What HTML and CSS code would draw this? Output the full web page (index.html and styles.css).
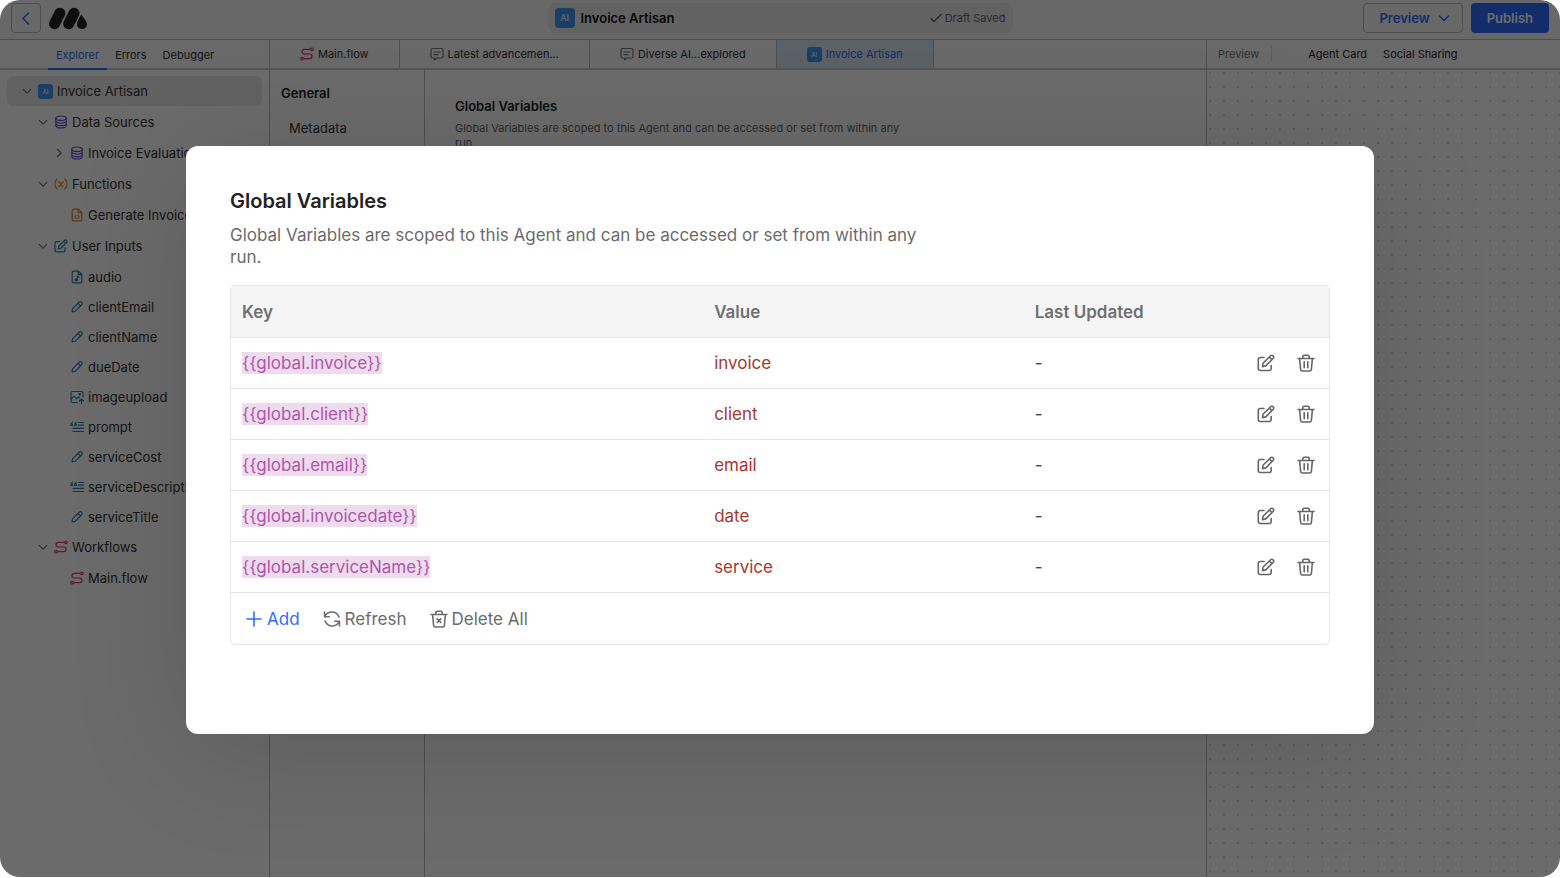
FILE: index.html
```html
<!DOCTYPE html>
<html lang="en">
<head>
<meta charset="utf-8">
<title>Invoice Artisan</title>
<link rel="stylesheet" href="styles.css">
</head>
<body>
<svg class="sprite" aria-hidden="true">
  <symbol id="chev-down" viewBox="0 0 12 12"><path d="M1.500 4l4.500 4.500L10.500 4"/></symbol>
  <symbol id="chev-right" viewBox="0 0 12 12"><path d="M4 1.500L8.500 6 4 10.500"/></symbol>
  <symbol id="db" viewBox="0 0 14 14"><ellipse cx="7" cy="3.200" rx="5.200" ry="2.200"/><path d="M1.800 3.200v7.600c0 1.200 2.300 2.200 5.200 2.200s5.200-1 5.200-2.200V3.200M1.800 5.800C1.800 7 4.100 8 7 8s5.200-1 5.200-2.200M1.800 8.400c0 1.200 2.300 2.200 5.200 2.200s5.200-1 5.200-2.200"/></symbol>
  <symbol id="fn" viewBox="0 0 14 14"><path d="M3 2C.3 5 .3 9 3 12M11 2c2.700 3 2.700 7 0 10M4.600 4.800h1L8 9.300h1.200M9.500 4.800c-1.600 0-2.900 4.500-4.900 4.500"/></symbol>
  <symbol id="code-file" viewBox="0 0 14 14"><path d="M3.200 1.200h5.300l3.300 3.300v7.300a1 1 0 0 1-1 1H3.200a1 1 0 0 1-1-1V2.200a1 1 0 0 1 1-1zM8.300 1.400v3.300h3.300M6 7.300L4.800 8.800 6 10.300M8 7.300l1.200 1.500L8 10.300"/></symbol>
  <symbol id="audio-file" viewBox="0 0 14 14"><path d="M3.200 1.200h5.300l3.300 3.300v7.300a1 1 0 0 1-1 1H3.200a1 1 0 0 1-1-1V2.200a1 1 0 0 1 1-1zM8.300 1.400v3.300h3.300M7.300 9.800V6l1.500 1.200"/><circle cx="6.200" cy="9.800" r="1"/></symbol>
  <symbol id="pencil" viewBox="0 0 14 14"><path d="M2 12l.5-3.200 6.800-6.800c1.600-1.300 3.800.8 2.600 2.500L5.100 11.400zM8 3.400l2.600 2.600"/></symbol>
  <symbol id="edit" viewBox="0 0 18 18"><path d="M7 3.500H3.300C2 3.500 1.300 4.200 1.300 5.500v9c0 1.300.7 2 2 2h8.900c1.300 0 2-.7 2-2v-3M6 9.300l7.600-7.600c1.700-1.300 4 .8 2.700 2.600L8.800 11.900l-3.300.7zM12.300 3l2.600 2.600"/></symbol>
  <symbol id="image" viewBox="0 0 14 14"><path d="M7.500 12.500h-5c-1 0-1.500-.5-1.500-1.500V3c0-1 .5-1.500 1.500-1.500h9c1 0 1.500.5 1.500 1.500v4M1.200 9L4 6.200l2.500 2.500L8.500 7l1 .8M11.500 13.500V9.300M9.500 11l2-2 2 2"/><circle cx="9.700" cy="4.300" r=".7"/></symbol>
  <symbol id="prompt" viewBox="0 0 14 14"><path d="M8.500 2.500h5M8.500 5.200h5M3 8.300h10.500M3 11.500h10.500M2.600 2c-1.500.5-1.800 1.500-1.800 3.500h1.700V4H1M6.500 2C5 2.500 4.700 3.500 4.700 5.500h1.700V4H5"/></symbol>
  <symbol id="flow" viewBox="0 0 14 14"><circle cx="12" cy="2.300" r="1.300"/><circle cx="2" cy="11.700" r="1.300"/><path d="M10.500 2.300H4.300a2.350 2.350 0 0 0 0 4.700h5.400a2.350 2.350 0 0 1 0 4.700H3.500"/></symbol>
  <symbol id="chat" viewBox="0 0 14 14"><path d="M2.500 1.500h9c.9 0 1.500.6 1.500 1.500v6.500c0 .9-.6 1.500-1.500 1.500H6.800L4.500 12.800V11h-2C1.600 11 1 10.400 1 9.500V3c0-.9.6-1.500 1.500-1.500zM4 5h6M4 7.700h4"/></symbol>
  <symbol id="trash" viewBox="0 0 18 18"><path d="M1 4.500h16M2.600 4.500l1 10.700c.1 1.200.7 1.800 1.800 1.800h7.200c1.100 0 1.700-.6 1.800-1.800l1-10.700M5.800 4.300V2.500c0-.9.5-1.300 1.300-1.300h3.800c.8 0 1.300.4 1.300 1.300v1.800M7.200 7.700v6M10.800 7.700v6"/></symbol>
  <symbol id="trash-x" viewBox="0 0 18 18"><path d="M1 4.500h16M2.600 4.500l1 10.700c.1 1.200.7 1.800 1.800 1.800h7.200c1.100 0 1.700-.6 1.800-1.800l1-10.700M5.800 4.300V2.500c0-.9.5-1.300 1.300-1.300h3.800c.8 0 1.300.4 1.300 1.300v1.800M7.200 8.900l3.600 3.600M10.800 8.900l-3.600 3.600"/></symbol>
  <symbol id="refresh" viewBox="0 0 18 18"><path d="M1.500 2v4.800h4.700M1.800 6.500C4.500.8 13 .2 16 7M16.500 16v-4.800h-4.700M16.200 11.500C13.500 17.200 5 17.800 2 11"/></symbol>
  <symbol id="plus" viewBox="0 0 18 18"><path d="M9 2v14M2 9h14"/></symbol>
  <symbol id="check" viewBox="0 0 12 12"><path d="M1 6.500l3 3 7-7"/></symbol>
</svg>

<div class="app">
  <header class="topbar">
    <div class="brand">
      <button class="back" aria-label="Back"><svg class="i16"><path d="M10.500 3L5 8.500l5.500 5.500"/></svg></button>
      <svg class="logo" viewBox="0 0 38 24" role="img" aria-label="Logo"><path class="bar" d="M5.500 17.700L10.800 7.200M19.700 17.700L25 7.200"/><path class="drop" d="M32.300 8.200c1.800 3.500 5.700 6.500 5.700 10a5 5 0 0 1-10 0c0-3.500 2.800-6.500 4.300-10z"/></svg>
    </div>
    <div class="doc">
      <span class="ai ai-lg">AI</span>
      <strong class="doc-name">Invoice Artisan</strong>
      <span class="saved"><svg class="i12"><use href="#check"/></svg>Draft Saved</span>
    </div>
    <div class="actions">
      <button class="btn btn-line">Preview<svg class="i12"><use href="#chev-down"/></svg></button>
      <button class="btn btn-fill">Publish</button>
    </div>
  </header>

  <div class="work">
    <aside class="side">
      <nav class="side-tabs">
        <a href="#" class="on">Explorer</a><a href="#">Errors</a><a href="#">Debugger</a>
      </nav>
      <div class="tree">
        <div class="row root"><svg class="chev"><use href="#chev-down"/></svg><span class="ai">AI</span>Invoice Artisan</div>
        <div class="group">
          <div class="row l1"><svg class="chev"><use href="#chev-down"/></svg><svg class="ic purple"><use href="#db"/></svg>Data Sources</div>
          <div class="row l2"><svg class="chev"><use href="#chev-right"/></svg><svg class="ic purple"><use href="#db"/></svg>Invoice Evaluation</div>
        </div>
        <div class="group">
          <div class="row l1"><svg class="chev"><use href="#chev-down"/></svg><svg class="ic orange"><use href="#fn"/></svg>Functions</div>
          <div class="row l3"><svg class="ic orange"><use href="#code-file"/></svg>Generate Invoice</div>
        </div>
        <div class="group">
          <div class="row l1"><svg class="chev"><use href="#chev-down"/></svg><svg class="ic teal"><use href="#edit"/></svg>User Inputs</div>
          <div class="row l3"><svg class="ic teal"><use href="#audio-file"/></svg>audio</div>
          <div class="row l3"><svg class="ic teal"><use href="#pencil"/></svg>clientEmail</div>
          <div class="row l3"><svg class="ic teal"><use href="#pencil"/></svg>clientName</div>
          <div class="row l3"><svg class="ic teal"><use href="#pencil"/></svg>dueDate</div>
          <div class="row l3"><svg class="ic teal"><use href="#image"/></svg>imageupload</div>
          <div class="row l3"><svg class="ic teal"><use href="#prompt"/></svg>prompt</div>
          <div class="row l3"><svg class="ic teal"><use href="#pencil"/></svg>serviceCost</div>
          <div class="row l3"><svg class="ic teal"><use href="#prompt"/></svg>serviceDescription</div>
          <div class="row l3"><svg class="ic teal"><use href="#pencil"/></svg>serviceTitle</div>
        </div>
        <div class="group">
          <div class="row l1"><svg class="chev"><use href="#chev-down"/></svg><svg class="ic pink"><use href="#flow"/></svg>Workflows</div>
          <div class="row l3"><svg class="ic pink"><use href="#flow"/></svg>Main.flow</div>
        </div>
      </div>
    </aside>

    <main class="center">
      <nav class="tabs">
        <a href="#"><svg class="ic pink"><use href="#flow"/></svg>Main.flow</a>
        <a href="#"><svg class="ic gray"><use href="#chat"/></svg>Latest advancemen...</a>
        <a href="#"><svg class="ic gray"><use href="#chat"/></svg>Diverse AI...explored</a>
        <a href="#" class="on"><span class="ai">AI</span>Invoice Artisan</a>
      </nav>
      <div class="panes">
        <section class="settings">
          <h3>General</h3>
          <a href="#">Metadata</a>
        </section>
        <section class="content">
          <h3>Global Variables</h3>
          <p>Global Variables are scoped to this Agent and can be accessed or set from within any run.</p>
        </section>
      </div>
    </main>

    <aside class="preview">
      <nav class="preview-tabs">
        <span class="label">Preview</span>
        <a href="#">Agent Card</a><a href="#">Social Sharing</a>
      </nav>
      <div class="canvas"></div>
    </aside>
  </div>

  <div class="overlay">
    <div class="modal" role="dialog" aria-modal="true" aria-labelledby="modal-title">
      <h2 id="modal-title">Global Variables</h2>
      <p>Global Variables are scoped to this Agent and can be accessed or set from within any run.</p>
      <div class="box">
        <table>
          <colgroup><col class="c-key"><col class="c-value"><col class="c-date"><col></colgroup>
          <thead><tr><th>Key</th><th>Value</th><th>Last Updated</th><th></th></tr></thead>
          <tbody>
            <tr><td><mark>{{global.invoice}}</mark></td><td class="val">invoice</td><td>-</td><td><div class="tools"><button aria-label="Edit"><svg><use href="#edit"/></svg></button><button aria-label="Delete"><svg><use href="#trash"/></svg></button></div></td></tr>
            <tr><td><mark>{{global.client}}</mark></td><td class="val">client</td><td>-</td><td><div class="tools"><button aria-label="Edit"><svg><use href="#edit"/></svg></button><button aria-label="Delete"><svg><use href="#trash"/></svg></button></div></td></tr>
            <tr><td><mark>{{global.email}}</mark></td><td class="val">email</td><td>-</td><td><div class="tools"><button aria-label="Edit"><svg><use href="#edit"/></svg></button><button aria-label="Delete"><svg><use href="#trash"/></svg></button></div></td></tr>
            <tr><td><mark>{{global.invoicedate}}</mark></td><td class="val">date</td><td>-</td><td><div class="tools"><button aria-label="Edit"><svg><use href="#edit"/></svg></button><button aria-label="Delete"><svg><use href="#trash"/></svg></button></div></td></tr>
            <tr><td><mark>{{global.serviceName}}</mark></td><td class="val">service</td><td>-</td><td><div class="tools"><button aria-label="Edit"><svg><use href="#edit"/></svg></button><button aria-label="Delete"><svg><use href="#trash"/></svg></button></div></td></tr>
          </tbody>
        </table>
        <div class="foot">
          <button class="add"><svg><use href="#plus"/></svg>Add</button>
          <button><svg><use href="#refresh"/></svg>Refresh</button>
          <button><svg><use href="#trash-x"/></svg>Delete All</button>
        </div>
      </div>
    </div>
  </div>
</div>
</body>
</html>
```

FILE: styles.css
```css
* { box-sizing: border-box; margin: 0; }
body {
  padding-bottom: 1px;
  background: #fff;
  color: #333;
  font: 13px/16px Inter, "Liberation Sans", sans-serif;
}
a { color: inherit; text-decoration: none; }
button { font: inherit; color: inherit; background: none; border: 0; padding: 0; cursor: pointer; }
svg { fill: none; stroke: currentColor; stroke-linecap: round; stroke-linejoin: round; flex: none; }
.sprite { position: absolute; width: 0; height: 0; }
.i16 { width: 16px; height: 16px; stroke-width: 1.6; }
.i12 { width: 12px; height: 12px; stroke-width: 1.5; }
.ic { width: 14px; height: 14px; stroke-width: 1.2; }
.purple { color: #6f4fd8; }
.orange { color: #dd8a1c; }
.teal { color: #2b87a8; }
.pink { color: #e0396f; }
.gray { color: #777; }

.app {
  position: relative;
  display: flex;
  flex-direction: column;
  min-height: calc(100vh - 1px);
  background: #fff;
  border-radius: 20px;
  overflow: hidden;
}

/* Top bar */
.topbar {
  display: grid;
  grid-template-columns: 1fr minmax(0, 465px) 1fr;
  align-items: center;
  height: 40px;
  padding: 0 11px 3px;
  background: #f7f7f7;
  border-bottom: 1px solid #b8b8b8;
}
.brand { display: flex; align-items: center; gap: 8px; }
.back {
  display: grid;
  place-items: center;
  width: 30px;
  height: 30px;
  border: 1px solid #bbb;
  border-radius: 4px;
  color: #2f6bff;
}
.logo { width: 38px; height: 24px; }
.logo .bar { stroke: #222; stroke-width: 11; }
.logo .drop { fill: #222; stroke: none; }
.doc {
  display: flex;
  align-items: center;
  gap: 6px;
  height: 30px;
  padding: 0 7px;
  background: #e9e9e9;
  border-radius: 8px;
}
.doc-name { font-weight: 600; color: #111; }
.saved { display: flex; align-items: center; gap: 3px; margin-left: auto; font-size: 11px; color: #666; }
.ai {
  display: grid;
  place-items: center;
  width: 15px;
  height: 15px;
  border-radius: 3px;
  background: #3d97f5;
  color: #dcebfa;
  font-size: 6px;
  font-weight: 600;
  flex: none;
}
.ai-lg { width: 20px; height: 20px; font-size: 9px; border-radius: 4px; }
.actions { display: flex; justify-content: flex-end; gap: 8px; }
.btn {
  display: flex;
  align-items: center;
  gap: 8px;
  height: 30px;
  padding: 0 16px;
  border-radius: 4px;
  font-weight: 600;
}
.btn-line { border: 1px solid #bbb; color: #2f6bff; padding: 0 12px 0 15px; }
.btn-fill { background: #2f6bff; color: #fff; }

/* Workspace */
.work { display: grid; grid-template-columns: 270px 1fr 354px; flex: 1; }
.side { border-right: 1px solid #bbb; }
.side-tabs, .tabs, .preview-tabs {
  display: flex;
  align-items: stretch;
  height: 30px;
  border-bottom: 2px solid #c8c8c8;
  font-size: 11px;
  background: #f9f9f9;
}
.side-tabs { padding-left: 48px; }
.side-tabs a { display: flex; align-items: center; padding: 0 8px; height: 30px; }
.side-tabs .on { color: #2f6bff; border-bottom: 2px solid #2f6bff; padding-top: 2px; }
.tree { padding: 6px 7px; }
.row { display: flex; align-items: center; gap: 4px; height: 30px; white-space: nowrap; overflow: hidden; }
.row .chev { width: 10px; height: 10px; stroke-width: 1.5; color: #777; margin-right: 2px; }
.root, .l1 { margin-bottom: 1px; }
.root { background: #eaeaea; border-radius: 6px; padding-left: 15px; }
.l1 { padding-left: 31px; }
.l2 { padding-left: 47px; }
.l3 { padding-left: 63px; }
.group + .group { margin-top: 1px; }
.group:last-child { margin-top: 0; }
.l1 .ic.teal { stroke-width: 1.6; }

.center { display: flex; flex-direction: column; }
.tabs a {
  display: flex;
  align-items: center;
  gap: 4px;
  padding: 0 30px;
  border-right: 1px solid #bbb;
}
.tabs a.on { background: #dbe5f5; color: #2f6bff; }
.panes { display: grid; grid-template-columns: 155px 1fr; flex: 1; }
.settings { padding: 15px 11px; border-right: 1px solid #bbb; }
.settings h3, .content h3 { font-size: 13px; font-weight: 600; color: #222; }
.settings a { display: block; margin: 19px 8px; }
.content { padding: 28px 30px; }
.content p { max-width: 456px; margin-top: 7px; font-size: 11px; line-height: 15px; color: #666; }
.preview { display: flex; flex-direction: column; border-left: 1px solid #bbb; }
.preview-tabs { align-items: center; gap: 16px; padding-left: 11px; color: #222; }
.preview-tabs .label { color: #777; padding-right: 12px; margin-right: 20px; border-right: 1px solid #ddd; }
.canvas {
  flex: 1;
  background: radial-gradient(circle at 3px 3px, #dcdcdc 1px, transparent 1px) 0 0 / 14px 14px;
}

/* Dialog */
.overlay {
  position: absolute;
  inset: 0;
  display: grid;
  grid-template-columns: minmax(0, 1188px);
  place-content: center;
  padding-top: 3px;
  background: rgba(0, 0, 0, .58);
}
.modal {
  padding: 44px 44px 89px;
  background: #fff;
  border-radius: 12px;
  box-shadow: 0 16px 120px rgba(0, 0, 0, .14);
  font-size: 17px;
  line-height: 22px;
  color: #6b6b6b;
}
.modal h2 { font-size: 20px; line-height: 22px; font-weight: 600; color: #222; }
.modal p { max-width: 700px; margin-top: 12px; }
.box { margin-top: 17px; border: 1px solid #e6e6e6; border-radius: 5px; overflow: hidden; }
.box table { width: 100%; border-collapse: collapse; table-layout: fixed; }
.c-key { width: 43%; }
.c-value { width: 29.2%; }
.c-date { width: 14%; }
.box th, .box td { height: 51px; padding: 0 11px; text-align: left; border-bottom: 1px solid #e6e6e6; color: #444; }
.box th { height: 52px; background: #f5f5f5; color: #707070; font-weight: 600; }
.box td.val { color: #a8362c; }
.box mark { display: inline-block; background: #eedcee; color: #b055ab; }
.tools { display: flex; justify-content: flex-end; gap: 22px; padding-right: 3px; color: #666; }
.tools button { display: flex; }
.modal svg { width: 18px; height: 18px; stroke-width: 1.6; }
.foot { display: flex; align-items: center; gap: 23px; height: 51px; padding: 0 14px; }
.foot button { display: flex; align-items: center; gap: 4px; }
.foot .add { color: #2f6bff; }
```
